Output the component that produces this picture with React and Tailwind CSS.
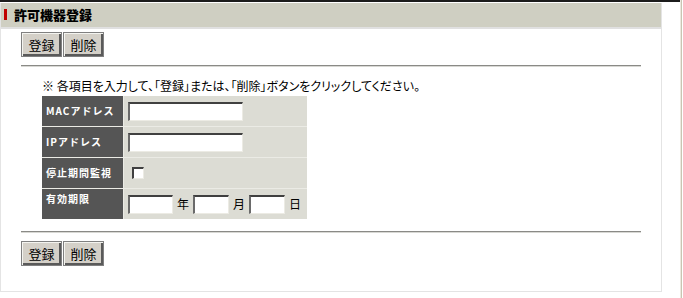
import React from "react";

const jp = "font-['MS_UI_Gothic','Noto_Sans_CJK_JP',sans-serif]";

const Btn = ({ label }) => (
  <button className="w-[41px] h-[25px] bg-[#d4d0c8] border border-[#808080] shadow-[inset_1px_1px_0_#f4f4f0,inset_-2px_-2px_0_#5a5a5a] text-[13px] leading-none text-black flex items-center justify-center pb-px">
    {label}
  </button>
);

const Buttons = () => (
  <div className="flex gap-px">
    <Btn label="登録" />
    <Btn label="削除" />
  </div>
);

const Field = ({ w }) => (
  <div className={`${w} h-[19px] bg-white border-t-2 border-l-2 border-t-[#404040] border-l-[#6a6a6a] border-b border-r border-b-[#ecebe4] border-r-[#ecebe4]`} />
);

const Row = ({ label, top, children }) => (
  <>
    <div className={`bg-[#555555] h-[30px] flex ${top ? "items-start pt-[5px]" : "items-center"} pl-[4px] text-white font-bold text-[10px] tracking-[1px] leading-none`}>
      {label}
    </div>
    <div className="bg-[#dcdcd4] h-[30px] flex items-center pl-[4px] gap-[4px] text-[12px] text-black">
      {children}
    </div>
  </>
);

const Devices = () => {
  return (
    <div className={`w-[683px] h-[298px] bg-white flex overflow-hidden ${jp}`}>
      <div className="w-[680px] flex flex-col">
        <div className="h-[2px] bg-[#1c1c1c]" />
        <div className="h-px" />
        <div className="w-[662px] h-[289px] border-l border-r border-b border-[#e4e4e4] flex flex-col">
          <div className="h-[24px] bg-[#cfcfc2] flex items-center">
            <div className="ml-[3px] w-[3px] h-[11px] bg-[#c00000] -mt-[2px]" />
            <div className="ml-[7px] text-[13px] font-black text-black">許可機器登録</div>
          </div>
          <div className="h-[2px] bg-[#e0e0e0]" />
          <div className="pl-[20px]">
            <div className="mt-[3px]">
              <Buttons />
            </div>
            <div className="mt-[8px] w-[620px] h-[2px] border-t border-[#8a8a86] border-b border-b-[#d8d8d4]" />
            <div className="pl-[21px]">
              <div className="mt-[12px] text-[12px] leading-[14px] text-black [font-feature-settings:'palt']">
                ※ 各項目を入力して、「登録」または、「削除」ボタンをクリックしてください。
              </div>
              <div className="mt-[3px] w-[265px] grid grid-cols-[81px_183px] gap-px bg-[#ebebe5]">
                <Row label="MACアドレス">
                  <Field w="w-[115px]" />
                </Row>
                <Row label="IPアドレス">
                  <Field w="w-[115px]" />
                </Row>
                <Row label="停止期間監視">
                  <div className="ml-[4px] w-[12px] h-[12px] bg-white border-t-2 border-l-2 border-[#404040] border-b border-r border-b-[#ecebe4] border-r-[#ecebe4]" />
                </Row>
                <Row label="有効期限" top>
                  <Field w="w-[45px]" />
                  <span>年</span>
                  <Field w="w-[36px]" />
                  <span>月</span>
                  <Field w="w-[36px]" />
                  <span>日</span>
                </Row>
              </div>
            </div>
            <div className="mt-[12px] w-[620px] h-[2px] border-t border-[#8a8a86] border-b border-b-[#d8d8d4]" />
            <div className="mt-[8px]">
              <Buttons />
            </div>
          </div>
        </div>
      </div>
      <div className="w-[3px] border-l border-[#ece9e0] flex">
        <div className="w-px bg-[#c9c5b2]" />
      </div>
    </div>
  );
};

export default function App() {
  return <Devices />;
}
